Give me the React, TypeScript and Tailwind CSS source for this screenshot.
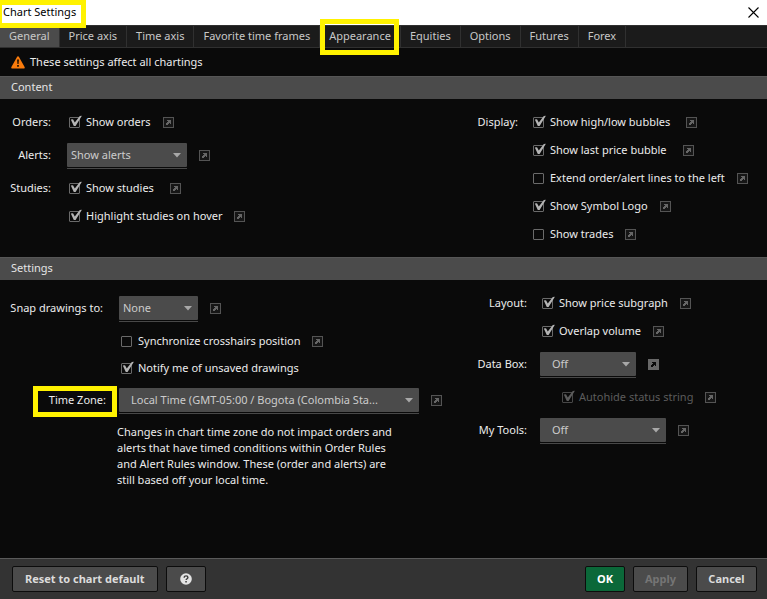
import React, { useState } from 'react';

const tabs = [
  'General',
  'Price axis',
  'Time axis',
  'Favorite time frames',
  'Appearance',
  'Equities',
  'Options',
  'Futures',
  'Forex',
];

function Highlight({ className }: { className: string }) {
  return <span className={`pointer-events-none absolute z-10 border-5 border-[#fff200] ${className}`} />;
}

function LinkButton({ label, filled }: { label: string; filled?: boolean }) {
  return (
    <button type="button" aria-label={`Open ${label}`} className="shrink-0">
      <svg width="11" height="11" viewBox="0 0 11 11" shapeRendering="crispEdges" className="block">
        <rect x="0.5" y="0.5" width="10" height="10" fill={filled ? '#686868' : '#161616'} stroke={filled ? '#686868' : '#545454'} />
        <path d="M4 3h4v4h-1v-1h-1v1h-1v1h-2v-2h1v-1h1v-1h-1z" fill={filled ? '#0a0a0a' : '#666666'} />
      </svg>
    </button>
  );
}

interface CheckProps {
  label: string;
  checked?: boolean;
  disabled?: boolean;
  link?: boolean;
  wide?: boolean;
}

function Check({ label, checked = false, disabled = false, link = true, wide = false }: CheckProps) {
  const [on, setOn] = useState(checked);

  return (
    <div className={`flex items-center pl-0.5 ${wide ? 'gap-4' : 'gap-3'}`}>
      <label className={`flex items-center gap-1.5 whitespace-nowrap ${disabled ? 'text-[#5c5c5c]' : ''}`}>
        <span className="relative block size-[11px]">
          <input
            type="checkbox"
            checked={on}
            disabled={disabled}
            onChange={(e) => setOn(e.target.checked)}
            className="peer block size-[11px] appearance-none rounded-[1px] border border-[#6a6a6a] bg-[#0a0a0a] disabled:border-[#484848]"
          />
          <svg
            width="14"
            height="13"
            viewBox="0 0 14 13"
            className={`pointer-events-none absolute -top-0.5 left-0 hidden peer-checked:block ${disabled ? 'text-[#5c5c5c]' : 'text-[#b4b4b4]'}`}
          >
            <path d="M1.8 4.6L4 4.2L5.8 7.6L10.8 1L12.9 0.8L6.6 11H4.8Z" fill="currentColor" />
          </svg>
        </span>
        {label}
      </label>
      {link && <LinkButton label={label} />}
    </div>
  );
}

interface DropdownProps {
  id: string;
  value: string;
  className: string;
  filled?: boolean;
}

function Dropdown({ id, value, className, filled }: DropdownProps) {
  return (
    <div className="flex items-center gap-3">
      <div className="relative border-b border-[#484848] pt-px pb-px">
        <select
          id={id}
          className={`block h-6 appearance-none truncate rounded-[1px] bg-[#4b4b4b] pr-8 text-[#cbcbcb] ${className}`}
        >
          <option>{value}</option>
        </select>
        <svg width="8" height="5" viewBox="0 0 8 5" className="pointer-events-none absolute top-[11px] right-1.5">
          <path d="M0 0h8L4 4.5z" fill="#a8a8a8" />
        </svg>
      </div>
      <LinkButton label={value} filled={filled} />
    </div>
  );
}

interface RowProps {
  label?: string;
  htmlFor?: string;
  labelClass: string;
  height?: string;
  marked?: boolean;
  children: React.ReactNode;
}

function Row({ label, htmlFor, labelClass, height = 'h-7', marked, children }: RowProps) {
  return (
    <div className={`flex items-center ${height}`}>
      <div className={`relative shrink-0 text-right whitespace-nowrap ${labelClass}`}>
        {htmlFor ? <label htmlFor={htmlFor}>{label}</label> : label}
        {marked && <Highlight className="-top-1.5 right-0.5 h-[31px] w-[84px]" />}
      </div>
      {children}
    </div>
  );
}

function SectionTitle({ children }: { children: React.ReactNode }) {
  return (
    <h2 className="h-[23px] border-t border-[#565656] bg-[#4b4b4b] pl-[11px] leading-5 text-[#e4e4e4]">{children}</h2>
  );
}

export default function App() {
  const [active, setActive] = useState('General');

  return (
    <div className="flex min-h-screen flex-col bg-[#0a0a0a] font-['Noto_Sans','Open_Sans',sans-serif] text-[11px] leading-4 text-[#ececec]">
      <header className="relative flex h-[25px] items-center justify-between bg-white pr-2 pb-px pl-[3px] text-black">
        <h1>Chart Settings</h1>
        <button type="button" aria-label="Close">
          <svg width="11" height="11" viewBox="0 0 11 11" className="block">
            <path d="M0.5 0.5l10 10M10.5 0.5l-10 10" stroke="#000" strokeWidth="1.1" />
          </svg>
        </button>
        <Highlight className="top-0 left-0 h-7 w-[86px] border-l-2" />
      </header>

      <nav className="flex h-[23px] border-y border-[#303030] bg-[#1b1b1b]">
        {tabs.map((tab) => (
          <button
            key={tab}
            type="button"
            onClick={() => setActive(tab)}
            className={`relative border-r border-[#303030] px-[9px] pb-0.5 whitespace-nowrap text-[#c8c8c8] ${active === tab ? 'bg-[#4b4b4b]' : ''}`}
          >
            {tab}
            {tab === 'Appearance' && <Highlight className="-top-[7px] left-0 h-9 w-[79px]" />}
          </button>
        ))}
      </nav>

      <p className="flex h-7 items-center gap-[5px] pl-[11px]">
        <svg width="14" height="13" viewBox="0 0 14 13">
          <path d="M7 0.3c.5 0 .8.2 1 .6l5.6 10c.4.8 0 1.6-.8 1.6H1.2c-.8 0-1.2-.8-.8-1.6L6 .9c.2-.4.5-.6 1-.6z" fill="#f97b0c" />
          <path d="M6 3.5h2l-.4 4.5H6.4zM6.1 9h1.8v1.8H6.1z" fill="#2a1500" />
        </svg>
        These settings affect all chartings
      </p>

      <SectionTitle>Content</SectionTitle>
      <section className="flex py-[9px]">
        <div className="flex-1">
          <Row label="Orders:" labelClass="w-[67px] pr-4">
            <Check label="Show orders" checked />
          </Row>
          <Row label="Alerts:" htmlFor="alerts" labelClass="w-[67px] pr-4" height="h-[38px]">
            <Dropdown id="alerts" value="Show alerts" className="w-[120px] pl-1" />
          </Row>
          <Row label="Studies:" labelClass="w-[67px] pr-4">
            <Check label="Show studies" checked wide />
          </Row>
          <Row labelClass="w-[67px]">
            <Check label="Highlight studies on hover" checked />
          </Row>
        </div>
        <div className="w-[300px]">
          <Row label="Display:" labelClass="w-16 pr-[13px]">
            <Check label="Show high/low bubbles" checked wide />
          </Row>
          <Row labelClass="w-16">
            <Check label="Show last price bubble" checked wide />
          </Row>
          <Row labelClass="w-16">
            <Check label="Extend order/alert lines to the left" />
          </Row>
          <Row labelClass="w-16">
            <Check label="Show Symbol Logo" checked />
          </Row>
          <Row labelClass="w-16">
            <Check label="Show trades" />
          </Row>
        </div>
      </section>

      <SectionTitle>Settings</SectionTitle>
      <section className="flex flex-1 pt-[9px] pb-4">
        <div className="flex-1">
          <Row label="Snap drawings to:" htmlFor="snap" labelClass="w-[119px] pr-4" height="h-[38px]">
            <Dropdown id="snap" value="None" className="w-[79px] pl-1" />
          </Row>
          <Row labelClass="w-[119px]">
            <Check label="Synchronize crosshairs position" />
          </Row>
          <Row labelClass="w-[119px]" height="h-[26px]">
            <Check label="Notify me of unsaved drawings" checked link={false} />
          </Row>
          <Row label="Time Zone:" htmlFor="zone" labelClass="w-[119px] pr-[13px]" height="h-[38px]" marked>
            <Dropdown id="zone" value="Local Time (GMT-05:00 / Bogota (Colombia Sta..." className="w-[300px] pl-3" />
          </Row>
          <p className="ml-[117px] max-w-[280px] pt-[5px]">
            Changes in chart time zone do not impact orders and alerts that have timed conditions within Order Rules and Alert
            Rules window. These (order and alerts) are still based off your local time.
          </p>
        </div>
        <div className="w-[300px]">
          <Row label="Layout:" labelClass="w-[73px] pr-[13px]">
            <Check label="Show price subgraph" checked />
          </Row>
          <Row labelClass="w-[73px]">
            <Check label="Overlap volume" checked />
          </Row>
          <Row label="Data Box:" htmlFor="databox" labelClass="w-[73px] pr-[13px]" height="h-[38px]">
            <Dropdown id="databox" value="Off" className="w-24 pl-3" filled />
          </Row>
          <Row labelClass="w-[93px]">
            <Check label="Autohide status string" checked disabled />
          </Row>
          <Row label="My Tools:" htmlFor="tools" labelClass="w-[73px] pr-[13px]" height="h-[38px]">
            <Dropdown id="tools" value="Off" className="w-[126px] pl-3" />
          </Row>
        </div>
      </section>

      <footer className="flex items-start gap-2 border-t border-[#5a5a5a] bg-[#333333] py-[7px] pr-2.5 pl-3 font-bold text-[#dcdcdc]">
        <button type="button" className="h-[26px] rounded-xs border border-[#0c0c0c] bg-[#4b4b4b] px-3">
          Reset to chart default
        </button>
        <button
          type="button"
          aria-label="Help"
          className="flex h-[26px] w-10 items-center justify-center rounded-xs border border-[#0c0c0c] bg-[#4b4b4b]"
        >
          <svg width="12" height="12" viewBox="0 0 12 12">
            <circle cx="6" cy="6" r="5.8" fill="#e4e4e4" />
            <path d="M4.2 4.7c0-1.2.8-1.8 1.9-1.8 1 0 1.8.6 1.8 1.5 0 1.3-1.8 1.3-1.8 2.7" fill="none" stroke="#3c3c3c" strokeWidth="1.4" />
            <rect x="5.3" y="8" width="1.5" height="1.5" fill="#3c3c3c" />
          </svg>
        </button>
        <button type="button" className="ml-auto h-[26px] w-10 rounded-xs border border-[#0c0c0c] bg-[#0b6839] text-white">
          OK
        </button>
        <button type="button" disabled className="h-[26px] w-[55px] rounded-xs border border-[#0c0c0c] bg-[#4b4b4b] text-[#757575]">
          Apply
        </button>
        <button type="button" className="h-[26px] w-[61px] rounded-xs border border-[#0c0c0c] bg-[#4b4b4b]">
          Cancel
        </button>
      </footer>
    </div>
  );
}
